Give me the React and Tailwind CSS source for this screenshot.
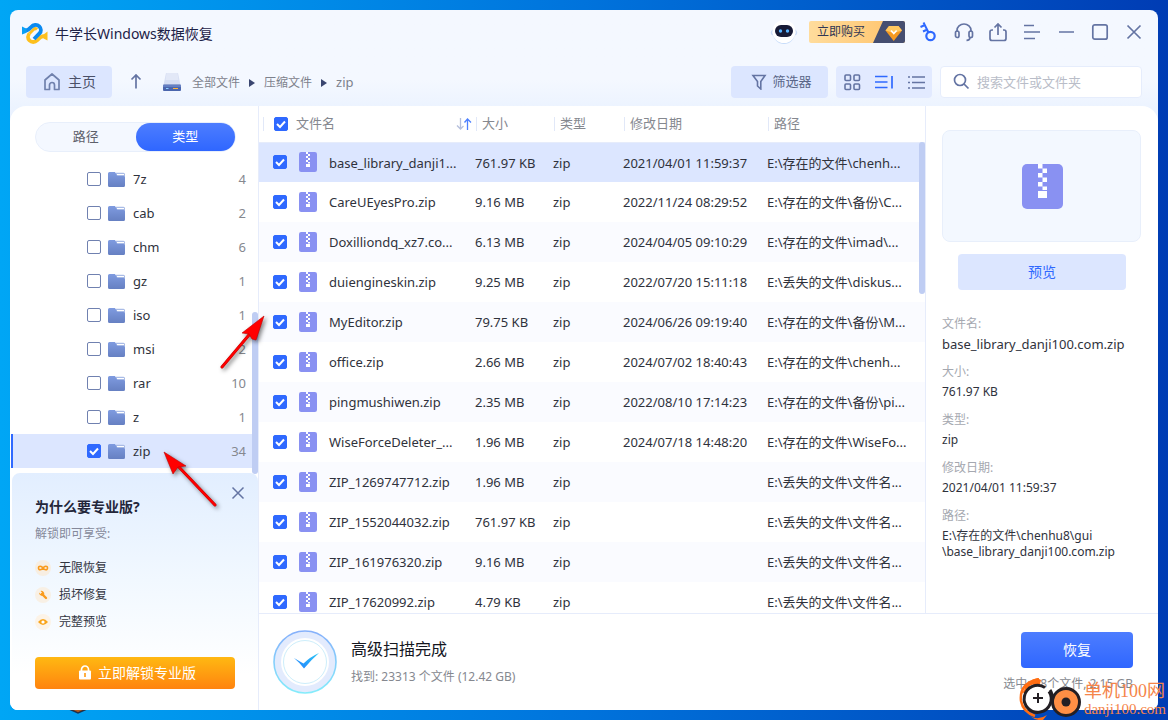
import React, { useState } from "react";

const folders = [
  { name: "7z", count: 4 },
  { name: "cab", count: 2 },
  { name: "chm", count: 6 },
  { name: "gz", count: 1 },
  { name: "iso", count: 1 },
  { name: "msi", count: 2 },
  { name: "rar", count: 10 },
  { name: "z", count: 1 },
  { name: "zip", count: 34 },
];

const files = [
  { name: "base_library_danji1...", size: "761.97 KB", date: "2021/04/01 11:59:37", path: "E:\\存在的文件\\chenh..." },
  { name: "CareUEyesPro.zip", size: "9.16 MB", date: "2022/11/24 08:29:52", path: "E:\\存在的文件\\备份\\C..." },
  { name: "Doxilliondq_xz7.co...", size: "6.13 MB", date: "2024/04/05 09:10:29", path: "E:\\存在的文件\\imad\\..." },
  { name: "duiengineskin.zip", size: "9.25 MB", date: "2022/07/20 15:11:18", path: "E:\\丢失的文件\\diskus..." },
  { name: "MyEditor.zip", size: "79.75 KB", date: "2024/06/26 09:19:40", path: "E:\\存在的文件\\备份\\M..." },
  { name: "office.zip", size: "2.66 MB", date: "2024/07/02 18:40:43", path: "E:\\存在的文件\\chenh..." },
  { name: "pingmushiwen.zip", size: "2.35 MB", date: "2022/08/10 17:14:23", path: "E:\\存在的文件\\备份\\pi..." },
  { name: "WiseForceDeleter_...", size: "1.96 MB", date: "2024/07/18 14:48:20", path: "E:\\存在的文件\\WiseFo..." },
  { name: "ZIP_1269747712.zip", size: "1.96 MB", date: "", path: "E:\\丢失的文件\\文件名..." },
  { name: "ZIP_1552044032.zip", size: "761.97 KB", date: "", path: "E:\\丢失的文件\\文件名..." },
  { name: "ZIP_161976320.zip", size: "9.16 MB", date: "", path: "E:\\丢失的文件\\文件名..." },
  { name: "ZIP_17620992.zip", size: "4.79 KB", date: "", path: "E:\\丢失的文件\\文件名..." },
];

const details = [
  { label: "文件名:", value: "base_library_danji100.com.zip", big: true },
  { label: "大小:", value: "761.97 KB" },
  { label: "类型:", value: "zip" },
  { label: "修改日期:", value: "2021/04/01 11:59:37" },
  { label: "路径:", value: "E:\\存在的文件\\chenhu8\\gui \\base_library_danji100.com.zip" },
];

const Check = ({ label, ...props }) => (
  <span className="grid size-[14px] shrink-0">
    <input
      type="checkbox"
      aria-label={label}
      className="col-start-1 row-start-1 size-[14px] appearance-none rounded-[2px] border border-[#7081b0] bg-white checked:border-[#2f69ff] checked:bg-[#2f69ff] peer"
      {...props}
    />
    <svg
      viewBox="0 0 14 14"
      className="pointer-events-none invisible col-start-1 row-start-1 size-[14px] peer-checked:visible"
      fill="none"
      stroke="#fff"
      strokeWidth="2"
    >
      <path d="M3 7l3 3 5-5.5" />
    </svg>
  </span>
);

const ZipIcon = ({ className }) => (
  <svg viewBox="0 0 41 45" className={className}>
    <rect width="41" height="45" rx="5" fill="#8991f2" />
    <path
      fill="#fff"
      d="M16 0h4.5v4.5H16zM20.500 4.500h4.500v4.500h-4.500zM16 9h4.500v4.500H16zM20.500 13.500h4.500V18h-4.500zM16 18h4.500v4.500H16zM20.500 22.500h4.500V26h-4.500zM16 27h9v7h-9z"
    />
  </svg>
);

const FolderIcon = () => (
  <svg viewBox="0 0 17 15" className="h-[15px] w-[17px]">
    <defs>
      <linearGradient id="folder" x1="0" y1="0" x2="0" y2="1">
        <stop offset="0" stopColor="#7f9be0" />
        <stop offset="1" stopColor="#6680c2" />
      </linearGradient>
    </defs>
    <path d="M8 .8h7.500a1.500 1.500 0 011.500 1.500V8H6z" fill="#a9bbe6" />
    <path d="M9 2.500h7" stroke="#fff" />
    <path d="M0 1.500A1.500 1.500 0 011.500 0h4.700c.8 0 1.200.4 1.600 1.200l.9 2c.3.600.6.800 1.300.800h5.500A1.500 1.500 0 0117 5.500v8a1.500 1.500 0 01-1.500 1.500h-14A1.500 1.500 0 010 13.500z" fill="url(#folder)" />
  </svg>
);

const Logo = () => (
  <svg viewBox="0 0 26 24" className="h-6 w-[26px]" fill="none" strokeWidth="3.800">
    <path d="M7.500 11.500c-2 2-2 5 0 7s5.500 2 7.500 0c2.500-2.700 4.500-5 8.500-4.200" stroke="#fdc01e" />
    <path d="M7.500 11.500L11.500 7.500a2.500 2.500 0 013.500 0" stroke="#fdc01e" strokeWidth="3" />
    <path d="M2 8.500c3.500.8 5-1 7-3.300 2.300-2.600 6-3 8.200-.8 2.200 2.200 2.200 5 .3 7L12 17" stroke="#0a8af0" />
    <path d="M0 4.500l4.500 2.200v4L0 12.500z" fill="#0aa0f6" />
    <path d="M25.500 9.500l-4 3v4l4 2z" fill="#fdc01e" />
  </svg>
);

const Robot = () => (
  <svg viewBox="0 0 28 26" className="h-[26px] w-7">
    <path d="M3 11q-3 3 0 5M25 11q3 3 0 5" stroke="#cbdcf7" strokeWidth="1.500" fill="none" />
    <circle cx="14" cy="14" r="11" fill="#c6dcfa" />
    <circle cx="14" cy="12.500" r="11.500" fill="#fff" />
    <rect x="5" y="6" width="18" height="12" rx="6" fill="#181b36" />
    <circle cx="10.500" cy="12" r="1.700" fill="#58b4ff" />
    <circle cx="17.500" cy="12" r="1.700" fill="#58b4ff" />
  </svg>
);

const Icon = ({ children, className = "" }) => (
  <svg
    viewBox="0 0 20 20"
    className={`size-5 ${className}`}
    fill="none"
    stroke="currentColor"
    strokeWidth="1.700"
  >
    {children}
  </svg>
);

const TitleBar = () => (
  <header className="flex h-11 items-center justify-between pl-3 pr-[14px] text-[#6474a3]">
    <div className="flex items-center gap-[7px] pt-1">
      <Logo />
      <h1 className="text-sm text-[#1d2247]">牛学长Windows数据恢复</h1>
    </div>
    <div className="flex items-center">
      <button aria-label="助手" className="mr-[11px]">
        <Robot />
      </button>
      <button className="mr-[15px] flex h-[22px] w-24 items-center justify-between overflow-hidden rounded-[2px] bg-linear-to-r from-[#ffdc9c] to-[#ffc267] pl-2 text-xs text-[#303653]">
        立即购买
        <svg viewBox="0 0 32 22" className="h-[22px] w-8">
          <path d="M10 0h22v22H0z" fill="#454e70" />
          <path d="M16 5h9.500l3.500 4.500-8.300 10.500-8.200-10.500z" fill="#f59a20" />
          <path d="M16 5h9.500l3.500 4.500-8.300 2.500-8.200-2.500z" fill="#ffc860" />
          <path d="M18 9.500l2.800 3 2.800-3" stroke="#fff" strokeWidth="1.600" fill="none" />
        </svg>
      </button>
      <div className="flex items-center gap-[14px]">
        <button aria-label="注册">
          <Icon className="text-[#2f69ff]">
            <circle cx="10.500" cy="14" r="4.200" strokeWidth="2.200" />
            <path d="M8.500 10.500L3.500.5M.5 5l4.500-2M3 9.500l4.300-2" strokeWidth="2" />
          </Icon>
        </button>
        <button aria-label="客服">
          <Icon>
            <path d="M3 10V8.500a7 6.500 0 0114 0V10" />
            <rect x="1.500" y="9" width="3.500" height="6.500" rx="1.700" strokeWidth="1.700" />
            <rect x="15" y="9" width="3.500" height="6.500" rx="1.700" strokeWidth="1.700" />
            <path d="M16 15.500c0 2-1 2.800-3.500 2.800" />
          </Icon>
        </button>
        <button aria-label="导出">
          <Icon>
            <path d="M5 8H4a2 2 0 00-2 2v6.500a2 2 0 002 2h12a2 2 0 002-2V10a2 2 0 00-2-2h-1M10 13V3M6.500 5.500L10 2l3.500 3.500" />
          </Icon>
        </button>
        <button aria-label="菜单">
          <Icon>
            <path d="M2 3.500h10M2 10h16M2 16.500h11" />
          </Icon>
        </button>
        <button aria-label="最小化">
          <Icon>
            <path d="M3 10h15" />
          </Icon>
        </button>
        <button aria-label="最大化">
          <Icon>
            <rect x="2.800" y="2.800" width="14.400" height="14.400" rx="2" />
          </Icon>
        </button>
        <button aria-label="关闭">
          <Icon>
            <path d="M3.500 3.500l13 13M16.500 3.500l-13 13" />
          </Icon>
        </button>
      </div>
    </div>
  </header>
);

const Crumb = () => (
  <svg viewBox="0 0 6 8" className="h-2 w-[6px]" fill="#3a4670">
    <path d="M0 0l6 4-6 4z" />
  </svg>
);

const Toolbar = () => (
  <nav className="flex items-center justify-between pt-3 pr-4 pb-2 pl-4">
    <div className="flex items-center text-xs text-[#7d818c]">
      <button className="flex h-8 w-[86px] items-center justify-center gap-[6px] rounded bg-[#dce6ff] text-sm text-[#4a5068]">
        <Icon className="text-[#7081ad]">
          <path d="M3 8l7-6 7 6v9.500h-4.500V13a2.500 2.500 0 00-5 0v4.500H3z" strokeLinejoin="round" />
        </Icon>
        主页
      </button>
      <button aria-label="上一级" className="ml-[14px] text-[#6474a3]">
        <Icon>
          <path d="M10 16.500V3M5.500 7.500L10 3l4.500 4.500" />
        </Icon>
      </button>
      <svg viewBox="0 0 18 18" className="mr-[11px] ml-[17px] size-[18px]">
        <path d="M3 0h12l2.500 12H.5z" fill="#d6def3" />
        <path d="M3.500 0h11l1 7h-13z" fill="#e2e8f7" />
        <rect y="11.500" width="18" height="6.500" rx="1" fill="#4b66ad" />
        <path d="M0 13h18" stroke="#7f98d8" />
        <path d="M3 15.500h2.500" stroke="#8fd0ff" />
        <path d="M10 15.500h5" stroke="#ffb53e" />
      </svg>
      <div className="flex items-center gap-[9px] pt-[2px]">
        <a href="#all">全部文件</a>
        <Crumb />
        <a href="#archives">压缩文件</a>
        <Crumb />
        <a href="#zip" className="text-[13px]">
          zip
        </a>
      </div>
    </div>
    <div className="flex items-center gap-2">
      <button className="flex h-8 w-[97px] items-center justify-center gap-[5px] rounded bg-[#dce6ff] pl-1 text-[13px] text-[#5a6688]">
        <svg viewBox="0 0 16 16" className="size-4" fill="none" stroke="#6474a3" strokeWidth="1.600">
          <path d="M2 1.500h12L9.800 7.500V15L6.500 12V7.500z" />
        </svg>
        筛选器
      </button>
      <div className="flex h-8 w-24 items-center justify-center gap-3 rounded bg-[#e2eaff] text-[#6474a3]">
        <button aria-label="图标视图">
          <Icon>
            <rect x="3" y="3" width="5.500" height="5.500" rx="1" strokeWidth="1.600" />
            <rect x="12" y="3" width="5.500" height="5.500" rx="1" strokeWidth="1.600" />
            <rect x="3" y="12" width="5.500" height="5.500" rx="1" strokeWidth="1.600" />
            <rect x="12" y="12" width="5.500" height="5.500" rx="1" strokeWidth="1.600" />
          </Icon>
        </button>
        <button aria-label="详情视图">
          <Icon className="text-[#2f69ff]">
            <path d="M1 4.500h12.500M1 10h12.500M1 15.500h12.500M18 4v12.500" />
          </Icon>
        </button>
        <button aria-label="列表视图">
          <Icon>
            <path d="M6 5h13M6 10.500h13M6 16h13M2 5h2M2 10.500h2M2 16h2" strokeWidth="1.400" />
          </Icon>
        </button>
      </div>
      <label className="flex h-8 w-[202px] items-center rounded border border-[#e6edfc] bg-white pl-[11px]">
        <Icon className="mr-[5px] shrink-0 text-[#6474a3]">
          <circle cx="8" cy="8" r="5.500" />
          <path d="M12 12l4.500 4.500" />
        </Icon>
        <input
          type="text"
          aria-label="搜索"
          placeholder="搜索文件或文件夹"
          className="w-full min-w-0 bg-transparent pt-[2px] text-[13px] outline-none placeholder:text-[#b9bdc8]"
        />
      </label>
    </div>
  </nav>
);

const Promo = () => (
  <section className="relative ml-[2px] flex flex-1 flex-col rounded-t-lg bg-linear-to-b from-[#e2eeff] via-[#f1f8ff] via-45% to-white to-85% px-[23px] pt-6 pb-[21px]">
    <button aria-label="关闭" className="absolute top-3 right-3 text-[#6474a3]">
      <svg viewBox="0 0 16 16" className="size-4" fill="none" stroke="currentColor" strokeWidth="1.500">
        <path d="M2.500 2.500l11 11M13.500 2.500l-11 11" />
      </svg>
    </button>
    <h2 className="text-sm leading-5 font-bold text-[#23263a]">为什么要专业版?</h2>
    <p className="mt-[9px] text-xs leading-4 text-[#85899a]">解锁即可享受:</p>
    <ul className="mt-[18px] flex flex-col gap-[11px] text-xs leading-4 text-[#31343f]">
      <li className="flex items-center gap-2">
        <svg viewBox="0 0 16 16" className="size-4">
          <circle cx="8" cy="8" r="8" fill="#f7eee2" />
          <path d="M8 8C6.500 6 3.500 5.500 3.500 8S6.500 10 8 8s4.500-2.500 4.500 0S9.500 10 8 8z" fill="none" stroke="#f99a1c" strokeWidth="1.600" />
        </svg>
        无限恢复
      </li>
      <li className="flex items-center gap-2">
        <svg viewBox="0 0 16 16" className="size-4">
          <circle cx="8" cy="8" r="8" fill="#f8f0e5" />
          <path d="M7 7l4 4" stroke="#f99a1c" strokeWidth="2.400" strokeLinecap="round" />
          <path d="M4 5.500L5.500 7 7 5.500 5.500 4a3 3 0 013.700 3.700A3 3 0 014 5.500z" fill="#f99a1c" />
        </svg>
        损坏修复
      </li>
      <li className="flex items-center gap-2">
        <svg viewBox="0 0 16 16" className="size-4">
          <circle cx="8" cy="8" r="8" fill="#fcf3e7" />
          <path d="M3 8q5-6 10 0-5 6-10 0z" fill="#f9a51c" />
          <circle cx="8" cy="8" r="1.600" fill="#fff" />
        </svg>
        完整预览
      </li>
    </ul>
    <button className="mt-auto flex h-8 items-center justify-center gap-[6px] rounded bg-linear-to-b from-[#ffb812] to-[#ff830f] pl-1 text-sm text-white">
      <svg viewBox="0 0 14 16" className="h-4 w-[14px]">
        <path d="M3.500 7V4.500a3.500 3.500 0 017 0V7" fill="none" stroke="#fff" strokeWidth="1.700" />
        <rect x="1" y="5.500" width="12" height="9" rx="1" fill="#fff" />
        <path d="M7 8v4" stroke="#ff9a11" strokeWidth="1.600" />
      </svg>
      立即解锁专业版
    </button>
  </section>
);

const Sidebar = () => {
  const [active, setActive] = useState("zip");

  return (
    <aside className="relative flex w-[249px] shrink-0 flex-col border-r border-[#e6ecfb]">
      <div className="mt-4 mr-[22px] ml-[25px] flex h-[30px] rounded-full border border-[#e8effb] bg-[#f4f8ff] text-[13px]">
        <button className="flex-1 text-[#5c606b]">路径</button>
        <button className="flex-1 rounded-full bg-linear-to-b from-[#4d7dff] to-[#2f66ff] text-white">类型</button>
      </div>
      <ul className="mt-[10px] text-[13px]">
        {folders.map((f) => (
          <li key={f.name}>
            <label
              className={`ml-px flex h-[34px] items-center border-l-2 pr-3 pl-[74px] ${
                f.name === active ? "border-[#2f69ff] bg-[#dce6ff]" : "border-transparent"
              }`}
            >
              <Check checked={f.name === active} onChange={() => setActive(f.name)} />
              <span className="ml-[7px]">
                <FolderIcon />
              </span>
              <span className="ml-2 flex-1 pt-[2px] text-[#2f323c]">{f.name}</span>
              <span className="pt-[2px] text-[#85888f]">{f.count}</span>
            </label>
          </li>
        ))}
      </ul>
      <div className="absolute top-[206px] right-0 h-[162px] w-[6px] rounded-full bg-[#bfcdf3]" />
      <div className="mt-[5px] flex flex-1 flex-col">
        <Promo />
      </div>
    </aside>
  );
};

const HeadCell = ({ children }) => (
  <th className="p-0 pl-px text-left font-normal">
    <span className="flex h-[14px] items-center border-l border-[#e1e8f8] pl-[5px]">{children}</span>
  </th>
);

const FileTable = () => (
  <div className="relative min-w-0 flex-1 overflow-hidden">
    <table className="w-full table-fixed border-collapse text-[13px] whitespace-nowrap text-[#2f323c]">
      <colgroup>
        <col className="w-[216px]" />
        <col className="w-[78px]" />
        <col className="w-[70px]" />
        <col className="w-[144px]" />
        <col />
      </colgroup>
      <thead>
        <tr className="h-9 border-b border-[#e6ecfb] text-[#85888f]">
          <th className="p-0 pl-1 text-left font-normal">
            <div className="flex h-[14px] items-center border-l border-[#e1e8f8] pl-[10px]">
              <Check label="全选" defaultChecked />
              <span className="ml-2 flex-1">文件名</span>
              <svg viewBox="0 0 16 12" className="mr-[3px] h-3 w-4" fill="none" strokeWidth="1.300">
                <path d="M4.500 0v11M1 7.500l3.500 3.500L7.500 8" stroke="#b5bfdc" />
                <path d="M11.500 12V1M8.500 4.500l3-3.500 3.500 3.500" stroke="#4d80ff" />
              </svg>
            </div>
          </th>
          <HeadCell>大小</HeadCell>
          <HeadCell>类型</HeadCell>
          <HeadCell>修改日期</HeadCell>
          <HeadCell>路径</HeadCell>
        </tr>
      </thead>
      <tbody>
        {files.map((file, i) => (
          <tr
            key={file.name}
            className={`h-10 ${i === 0 ? "bg-[#dce6ff]" : i % 2 === 0 ? "bg-[#fafbff]" : "bg-white"}`}
          >
            <td className="p-0 pl-[14px]">
              <div className="flex items-center">
                <Check label={file.name} defaultChecked />
                <ZipIcon className="ml-3 h-5 w-[18px]" />
                <span className="ml-3 pt-[2px]">{file.name}</span>
              </div>
            </td>
            <td className="p-0 pt-[2px]">{file.size}</td>
            <td className="p-0 pt-[2px]">zip</td>
            <td className="p-0 pt-[2px]">{file.date}</td>
            <td className="p-0 pt-[2px]">{file.path}</td>
          </tr>
        ))}
      </tbody>
    </table>
    <div className="absolute top-9 right-0 h-[152px] w-[6px] rounded-full bg-[#bfcdf3]" />
  </div>
);

const DetailPanel = () => (
  <section className="w-[233px] shrink-0 border-l border-[#e6ecfb] pt-6 pr-[17px] pl-4">
    <div className="flex h-28 items-center justify-center rounded-lg border border-[#e8effb] bg-[#f3f8ff] pl-[2px]">
      <ZipIcon className="h-[45px] w-[41px]" />
    </div>
    <div className="pt-3 pr-[15px] pl-4">
      <button className="h-9 w-full rounded bg-[#dce6ff] text-sm text-[#2f69ff]">预览</button>
    </div>
    <dl className="mt-[26px] flex flex-col gap-3 text-xs leading-4">
      {details.map((d) => (
        <div key={d.label} className="flex flex-col gap-1">
          <dt className="text-[#a5a8b0]">{d.label}</dt>
          <dd className={d.big ? "text-[13px] leading-4 text-[#2f323c]" : "text-[#2f323c]"}>{d.value}</dd>
        </div>
      ))}
    </dl>
  </section>
);

const Footer = () => (
  <footer className="flex h-[97px] items-center justify-between border-t border-[#e6ecfb] pr-[25px] pl-[14px]">
    <div className="flex items-center gap-[14px]">
      <svg viewBox="0 0 64 64" className="size-16">
        <defs>
          <linearGradient id="ring" x1="0" y1="0" x2="0" y2="1">
            <stop offset="0" stopColor="#86b0fb" />
            <stop offset="1" stopColor="#84ecfb" />
          </linearGradient>
          <linearGradient id="tick" x1="1" y1="0" x2="0" y2="1">
            <stop offset="0" stopColor="#2cc8f5" />
            <stop offset="1" stopColor="#2480ff" />
          </linearGradient>
        </defs>
        <circle cx="32" cy="32" r="31" fill="#e3ebfd" stroke="url(#ring)" strokeWidth="1.600" />
        <circle cx="32" cy="32" r="24" fill="#fff" />
        <circle cx="32" cy="32" r="21.500" fill="none" stroke="#cdeefb" />
        <path d="M21 28q5 3 9.500 5.500Q37 27 46 23q-8 7-15 15.500-4-5.500-10-10.500z" fill="url(#tick)" />
      </svg>
      <div className="pt-[2px]">
        <p className="text-base leading-6 text-[#15171f]">高级扫描完成</p>
        <p className="mt-1 text-xs leading-6 text-[#85888f]">找到: 23313 个文件 (12.42 GB)</p>
      </div>
    </div>
    <div className="flex flex-col items-end gap-2">
      <button className="h-9 w-28 rounded bg-linear-to-b from-[#4d7dff] to-[#2f66ff] text-sm text-white">恢复</button>
      <p className="text-xs leading-4 text-[#85888f]">选中: 38个文件, 2.15 GB</p>
    </div>
  </footer>
);

const Watermark = () => (
  <div className="absolute right-0 bottom-0 flex items-center gap-px font-['Liberation_Serif','Noto_Sans_CJK_SC',serif] text-[#f5854a]">
    <svg viewBox="0 0 64 42" className="h-[42px] w-16" fill="none">
      <path d="M20 1Q0 5 2 23q2 11 14 15M5 15Q9 3 21 4" stroke="#ff6d12" strokeWidth="2.500" />
      <path d="M13 2q5-3 9 0l-1 4-7 1zM11 38q8 5 17-1l-4 5q-7 1-13-4z" fill="#ff6d12" />
      <path d="M26 9.500a13.500 13.500 0 104 4" fill="#fff" stroke="#231f24" strokeWidth="3" />
      <path d="M14 20h10M19 15v10" stroke="#231f24" strokeWidth="2" />
      <circle cx="47" cy="24" r="13.500" fill="#ff8f45" stroke="#231f24" strokeWidth="3" />
      <circle cx="47" cy="24" r="4.500" fill="#231f24" />
      <path d="M31 12q3 4 2.500 12" stroke="#231f24" strokeWidth="3" />
    </svg>
    <div className="pr-[2px]">
      <p className="text-lg leading-5">单机100网</p>
      <p className="text-[15px] leading-4">danji100.com</p>
    </div>
  </div>
);

const Arrow = ({ className, d, head }) => (
  <svg viewBox="0 0 60 60" className={`pointer-events-none absolute size-[60px] drop-shadow-[2px_2px_2px_rgba(0,0,0,0.5)] ${className}`}>
    <path d={d} stroke="#c00000" strokeWidth="3" strokeLinecap="round" />
    <path d={d} stroke="#ff0000" strokeWidth="2" strokeLinecap="round" />
    <path d={head} fill="#ff0000" stroke="#c00000" strokeWidth=".6" />
  </svg>
);

const App = () => {
  return (
    <div className="relative flex h-screen flex-col overflow-hidden bg-linear-to-r from-[#00a6f5] via-[#0073dc] to-[#003cb4] p-[10px] font-['Noto_Sans','Noto_Sans_CJK_SC',sans-serif]">
      <svg viewBox="0 0 26 10" className="absolute bottom-[6px] left-[65px] h-[10px] w-[26px]">
        <path d="M2 4l11 5 11-5z" fill="#b45a1c" stroke="#243148" strokeWidth="1.500" />
      </svg>
      <div className="relative flex min-h-0 flex-1 flex-col overflow-hidden rounded-lg bg-linear-to-b from-[#f4f8ff] from-10% to-[#eaf2ff] to-15%">
        <TitleBar />
        <Toolbar />
        <main className="flex min-h-0 flex-1 overflow-hidden rounded-t-2xl bg-white">
          <Sidebar />
          <div className="flex min-w-0 flex-1 flex-col">
            <div className="flex min-h-0 flex-1 overflow-hidden">
              <FileTable />
              <DetailPanel />
            </div>
            <Footer />
          </div>
        </main>
      </div>
      <Arrow className="top-[310px] left-[212px]" d="M10 57L42 19" head="M52 6L30 23l7 1 3 5 4 1z" />
      <Arrow className="top-[448px] left-[160px]" d="M55 57L17 17" head="M4 4l9 22 5-7 8-1z" />
      <Watermark />
    </div>
  );
};

export default App;
